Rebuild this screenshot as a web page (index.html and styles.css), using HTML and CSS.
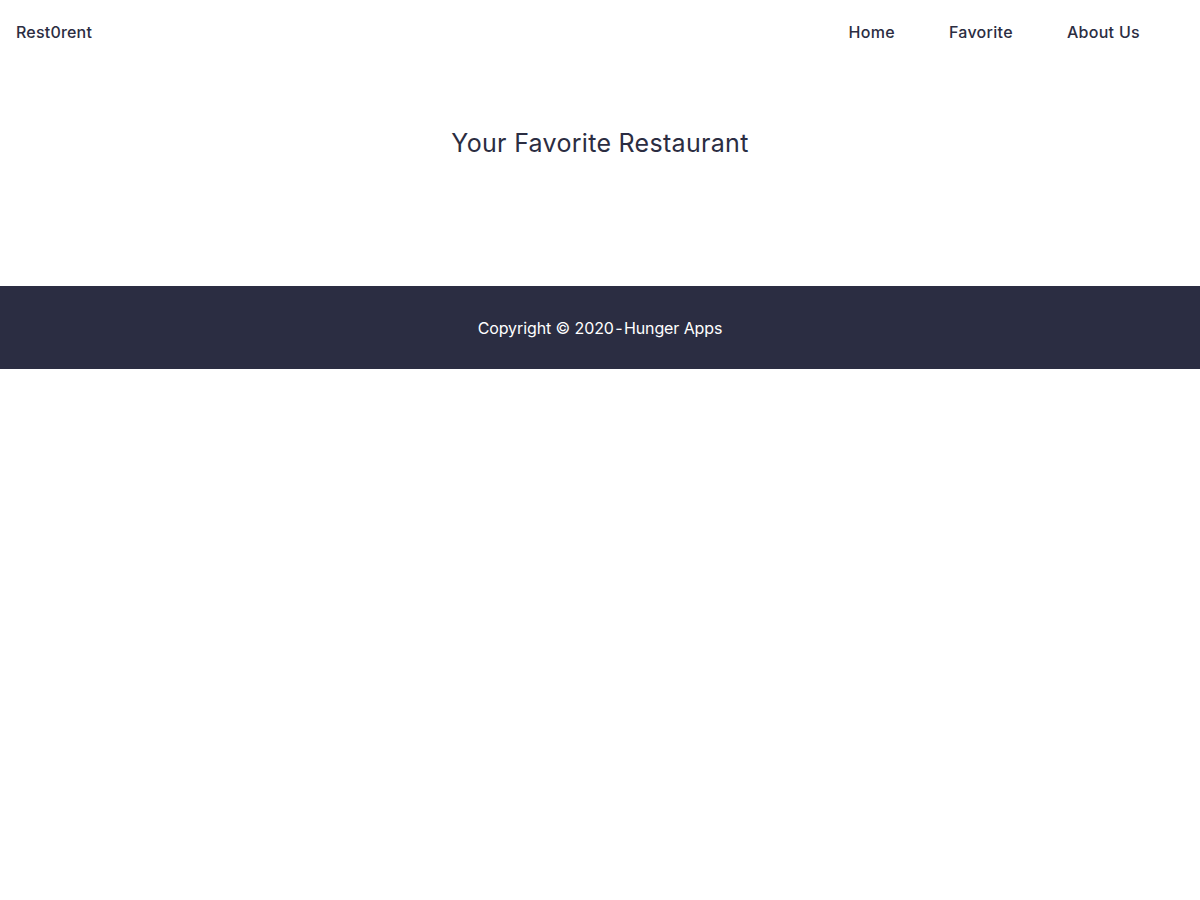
FILE: index.html
```html
<!DOCTYPE html>
<html lang="en">
<head>
<meta charset="utf-8">
<title>Rest0rent</title>
<link rel="stylesheet" href="styles.css">
</head>
<body>
<header class="app-bar">
  <a class="brand" href="#">Rest0rent</a>
  <nav class="nav">
    <ul class="nav-list">
      <li><a href="#">Home</a></li>
      <li><a href="#">Favorite</a></li>
      <li><a href="#">About Us</a></li>
    </ul>
  </nav>
</header>
<main class="content">
  <h2 class="content-title">Your Favorite Restaurant</h2>
</main>
<footer class="footer">
  <p>Copyright © 2020<span class="dash"> - </span>Hunger Apps</p>
</footer>
</body>
</html>
```
FILE: styles.css
```css
* { box-sizing: border-box; }
html, body { margin: 0; padding: 0; }
body {
  font-family: "Inter", "Noto Sans", sans-serif;
  color: #2b2d42;
  background: #ffffff;
}
.app-bar {
  height: 64px;
  display: flex;
  align-items: center;
  justify-content: space-between;
  padding: 0 16px;
}
.brand {
  font-size: 16px;
  font-weight: 500;
  color: #2b2d42;
  text-decoration: none;
  letter-spacing: 0.2px;
}
.nav-list {
  list-style: none;
  margin: 0;
  padding: 0 44px 0 0;
  display: flex;
  gap: 54px;
}
.nav-list a {
  font-size: 16px;
  font-weight: 500;
  color: #2b2d42;
  text-decoration: none;
  letter-spacing: 0.3px;
}
.content {
  height: 222px;
  padding-top: 62px;
}
.content-title {
  margin: 0;
  text-align: center;
  font-size: 25px;
  font-weight: 400;
  line-height: 34px;
  letter-spacing: 0.3px;
  color: #2b2d42;
}
.footer {
  background: #2b2d42;
  height: 83px;
  display: flex;
  align-items: center;
  justify-content: center;
}
.footer p {
  margin: 0;
  color: #ffffff;
  font-size: 16px;
  letter-spacing: -0.1px;
}
.dash {
  word-spacing: -3px;
}
```
